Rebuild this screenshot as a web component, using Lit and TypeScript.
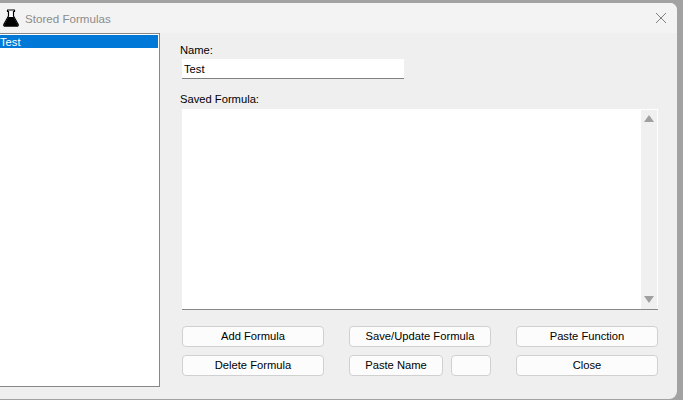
import { LitElement, html, css } from "lit";
import { customElement } from "lit/decorators.js";

@customElement("app-root")
export class AppRoot extends LitElement {
  static styles = css`
    :host { display: block; width: 683px; height: 400px; background: #a2a2a2; overflow: hidden; font-family: "Liberation Sans", Arial, sans-serif; font-size: 11.2px; color: #000; }
    .window { box-sizing: border-box; width: 677px; height: 396px; margin-top: 3px; background: #efefef; border-radius: 0 7px 8px 0; display: flex; flex-direction: column; overflow: hidden; }
    .title { height: 30px; flex: none; background: #f3f3f3; display: flex; align-items: center; padding: 0 10px 0 3px; }
    .flask { width: 16px; height: 18px; flex: none; margin-right: 6px; }
    .title span { flex: 1; color: #8c8c8c; font-size: 11.6px; }
    .x { width: 12px; height: 12px; flex: none; }
    .body { flex: 1; display: flex; min-height: 0; padding-bottom: 12px; }
    .list { box-sizing: border-box; width: 160px; flex: none; background: #fff; border: 1px solid #888; border-left: none; padding: 1px 1px 0 0; }
    .row { height: 13px; line-height: 14px; background: #0078d7; color: #fff; }
    .main { width: 476px; margin-left: 22px; display: flex; flex-direction: column; }
    label { display: block; line-height: 14px; margin-left: -2px; }
    .name { margin-top: 10px; }
    .input { box-sizing: border-box; width: 222px; height: 20px; margin-top: 2px; background: #fff; border-bottom: 1px solid #808080; padding-left: 2px; line-height: 20px; }
    .saved { margin-top: 13px; }
    .area { box-sizing: border-box; height: 201px; margin-top: 3px; background: #fff; border-bottom: 1px solid #888; display: flex; justify-content: flex-end; padding: 1px 1px 0 0; }
    .scroll { width: 16px; background: #f0f0f0; display: flex; flex-direction: column; justify-content: space-between; align-items: center; padding: 5px 0 6px; box-sizing: border-box; }
    .up, .down { width: 0; height: 0; border-left: 5.5px solid transparent; border-right: 5.5px solid transparent; }
    .up { border-bottom: 7px solid #a0a0a0; }
    .down { border-top: 7px solid #a0a0a0; }
    .buttons { display: grid; grid-template-columns: 142px 142px 142px; column-gap: 25px; row-gap: 8px; margin-top: 16px; }
    .pair { display: flex; gap: 8px; }
    .btn { box-sizing: border-box; height: 21px; padding-bottom: 1px; background: #fcfcfc; border: 1px solid #d0d0d0; border-radius: 4px; display: flex; align-items: center; justify-content: center; color: #000; }
    .pn { width: 94px; }
    .blank { width: 40px; }
  `;

  render() {
    return html`
      <div class="window">
        <div class="title">
          <svg class="flask" viewBox="0 0 16 18"><path d="M4.5 1h7v1.500h-1v4.500l4.600 8.200c.5 1-.1 2-1.200 2H2.100c-1.100 0-1.700-1-1.200-2L5.500 7V2.500h-1z" fill="#fff" stroke="#000" stroke-width="1.200" stroke-linejoin="round"/><path d="M5.400 8h5.200l4.200 7.600c.4.800 0 1.400-.9 1.400H2.100c-.9 0-1.300-.6-.9-1.400z" fill="#000"/></svg>
          <span>Stored Formulas</span>
          <svg class="x" viewBox="0 0 12 12"><path d="M1 1l10 10M11 1L1 11" stroke="#808080" stroke-width="1" fill="none"/></svg>
        </div>
        <div class="body">
          <div class="list"><div class="row">Test</div></div>
          <div class="main">
            <label class="name">Name:</label>
            <div class="input">Test</div>
            <label class="saved">Saved Formula:</label>
            <div class="area"><div class="scroll"><div class="up"></div><div class="down"></div></div></div>
            <div class="buttons">
              <div class="btn">Add Formula</div>
              <div class="btn">Save/Update Formula</div>
              <div class="btn">Paste Function</div>
              <div class="btn">Delete Formula</div>
              <div class="pair"><div class="btn pn">Paste Name</div><div class="btn blank"></div></div>
              <div class="btn">Close</div>
            </div>
          </div>
        </div>
      </div>
    `;
  }
}
